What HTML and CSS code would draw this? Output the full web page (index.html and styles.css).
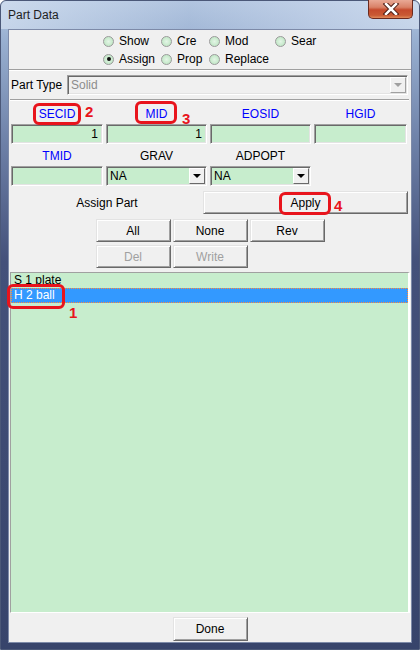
FILE: index.html
```html
<!DOCTYPE html>
<html>
<head>
    <link rel="stylesheet" href="styles.css">
</head>
<body>

<div class="window">
    <div class="titlebar">
        <span class="title">Part Data</span>
        <div class="close">
            <svg width="20" height="12" viewBox="0 0 20 12">
                <path d="M5 1 L15 11 M15 1 L5 11" stroke="#4a1a12" stroke-width="4.5" stroke-linecap="square"/>
                <path d="M5 1 L15 11 M15 1 L5 11" stroke="#ffffff" stroke-width="2.5" stroke-linecap="square"/>
            </svg>
        </div>
    </div>

    <div class="client">
        <div class="modes">
            <label class="opt"><span class="radio"></span>Show</label>
            <label class="opt"><span class="radio"></span>Cre</label>
            <label class="opt"><span class="radio"></span>Mod</label>
            <label class="opt"><span class="radio"></span>Sear</label>
            <label class="opt"><span class="radio on"></span>Assign</label>
            <label class="opt"><span class="radio"></span>Prop</label>
            <label class="opt"><span class="radio"></span>Replace</label>
        </div>
        <div class="sep"></div>

        <div class="type-row">
            <span class="type-label">Part Type</span>
            <div class="combo disabled">
                <span>Solid</span>
                <span class="drop"><span class="arrow"></span></span>
            </div>
        </div>
        <div class="sep wide"></div>

        <div class="fields">
            <span class="lbl blue">SECID</span>
            <span class="lbl blue">MID</span>
            <span class="lbl blue">EOSID</span>
            <span class="lbl blue">HGID</span>
            <div class="field">1</div>
            <div class="field">1</div>
            <div class="field"></div>
            <div class="field"></div>
        </div>

        <div class="fields second">
            <span class="lbl blue">TMID</span>
            <span class="lbl">GRAV</span>
            <span class="lbl">ADPOPT</span>
            <span></span>
            <div class="field"></div>
            <div class="combo">
                <span>NA</span>
                <span class="drop"><span class="arrow"></span></span>
            </div>
            <div class="combo">
                <span>NA</span>
                <span class="drop"><span class="arrow"></span></span>
            </div>
        </div>

        <div class="assign-row">
            <span class="assign-label">Assign Part</span>
            <button class="btn apply">Apply</button>
        </div>

        <div class="actions">
            <button class="btn">All</button>
            <button class="btn">None</button>
            <button class="btn">Rev</button>
            <button class="btn" disabled>Del</button>
            <button class="btn" disabled>Write</button>
        </div>

        <div class="list">
            <div class="item">S 1 plate</div>
            <div class="item selected">H 2 ball</div>
        </div>

        <div class="bottom">
            <button class="btn done">Done</button>
        </div>
    </div>

    <!-- annotation marks drawn over the dialog -->
    <div class="mark mark-secid"></div><span class="num num-2">2</span>
    <div class="mark mark-mid"></div><span class="num num-3">3</span>
    <div class="mark mark-apply"></div><span class="num num-4">4</span>
    <div class="mark mark-ball"></div><span class="num num-1">1</span>
</div>

</body>
</html>
```

FILE: styles.css
```css
body {
    margin: 0;
    font-family: "Liberation Sans", Arial, sans-serif;
    font-size: 12px;
    color: #000;
}

.window {
    position: relative;
    width: 420px;
    height: 650px;
    box-sizing: border-box;
    display: flex;
    flex-direction: column;
    background: linear-gradient(to bottom, #b4c7e1 0, #98afd0 40px, #6e81a8 140px, #44517a 260px, #37446b 100%);
    border-radius: 6px 6px 0 0;
    border: 1px solid #4b5878;
}

.titlebar {
    height: 28px;
    position: relative;
    background: linear-gradient(to right, rgba(214,226,242,0.7) 0, rgba(170,190,220,0.3) 45%, rgba(200,214,236,0.6) 75%, rgba(214,226,242,0.7) 100%);
    border-radius: 6px 6px 0 0;
}

.title {
    position: absolute;
    left: 7px;
    top: 7px;
    font-size: 12px;
    color: #1e1e1e;
}

.close {
    position: absolute;
    right: 6px;
    top: -1px;
    width: 45px;
    height: 19px;
    box-sizing: border-box;
    border: 1px solid #6b2a1e;
    border-top: none;
    border-radius: 0 0 5px 5px;
    background: linear-gradient(to bottom, #e9a996 0, #d98268 40%, #c54a2c 55%, #c95a34 85%, #e08a5a 100%);
    display: flex;
    align-items: center;
    justify-content: center;
}

.client {
    flex: 1;
    margin: 0 7px 6px 7px;
    border: 1px solid #7d8aa8;
    background: #f0f0f0;
    display: flex;
    flex-direction: column;
}

/* mode radios */
.modes {
    display: grid;
    grid-template-columns: 58px 48px 66px auto;
    grid-auto-rows: 18px;
    margin: 2px 0 0 94px;
}

.opt {
    display: flex;
    align-items: center;
    gap: 5px;
}

.radio {
    width: 11px;
    height: 11px;
    box-sizing: border-box;
    border-radius: 50%;
    border: 1px solid #9a9a9a;
    background: radial-gradient(circle at 50% 50%, #e4f5e6 0, #c3e8c8 70%, #b4d8b8 100%);
    display: flex;
    align-items: center;
    justify-content: center;
}

.radio.on::after {
    content: "";
    width: 4px;
    height: 4px;
    border-radius: 50%;
    background: #111;
}

.sep {
    margin-top: 1px;
    height: 0;
    border-top: 1px solid #a0a0a0;
    border-bottom: 1px solid #fff;
}

.sep.wide {
    margin: 4px 2px 0 1px;
}

/* part type */
.type-row {
    display: flex;
    align-items: center;
    margin: 4px 3px 0 2px;
}

.type-label {
    width: 56px;
}

.combo {
    flex: 1;
    height: 20px;
    box-sizing: border-box;
    display: flex;
    align-items: center;
    justify-content: space-between;
    padding-left: 3px;
    background: #c7edcd;
    border: 1px solid;
    border-color: #a0a0a0 #fff #fff #a0a0a0;
    box-shadow: inset 1px 1px 0 #696969, inset -1px -1px 0 #e3e3e3;
}

.combo.disabled {
    background: #f0f0f0;
    color: #8c8c8c;
}

.drop {
    width: 16px;
    height: 16px;
    margin-right: 1px;
    box-sizing: border-box;
    background: #f0f0f0;
    border: 1px solid;
    border-color: #fff #696969 #696969 #fff;
    display: flex;
    align-items: center;
    justify-content: center;
}

.arrow {
    width: 0;
    height: 0;
    border-left: 4px solid transparent;
    border-right: 4px solid transparent;
    border-top: 4px solid #000;
}

.disabled .drop {
    border-color: #fff #a0a0a0 #a0a0a0 #fff;
}

.disabled .arrow {
    border-top-color: #a0a0a0;
}

/* id fields */
.fields {
    display: grid;
    grid-template-columns: 92px 101px 101px 93px;
    grid-template-rows: 14px 20px;
    column-gap: 3px;
    row-gap: 3px;
    margin: 6px 4px 0 2px;
}

.fields.second {
    margin-top: 5px;
}

.lbl {
    text-align: center;
    line-height: 14px;
}

.lbl.blue {
    color: #0000ff;
}

.field {
    box-sizing: border-box;
    background: #c7edcd;
    text-align: right;
    padding-right: 4px;
    line-height: 18px;
    border: 1px solid;
    border-color: #a0a0a0 #fff #fff #a0a0a0;
    box-shadow: inset 1px 1px 0 #696969, inset -1px -1px 0 #e3e3e3;
}

/* assign row */
.assign-row {
    display: flex;
    align-items: center;
    margin: 5px 2px 0 2px;
}

.assign-label {
    width: 192px;
    text-align: center;
}

.btn {
    font-family: "Liberation Sans", Arial, sans-serif;
    font-size: 12px;
    color: #000;
    height: 23px;
    padding: 0;
    box-sizing: border-box;
    background: #f0f0f0;
    border: 1px solid;
    border-color: #e3e3e3 #696969 #696969 #e3e3e3;
    box-shadow: inset 1px 1px 0 #fff, inset -1px -1px 0 #a0a0a0;
}

.btn:disabled {
    color: #a0a0a0;
}

.apply {
    width: 205px;
}

.actions {
    display: grid;
    grid-template-columns: 75px 75px 75px;
    column-gap: 2px;
    row-gap: 3px;
    justify-content: center;
    margin-top: 5px;
}

/* part list */
.list {
    flex: 1;
    margin: 4px 1px 0 1px;
    background: #c7edcd;
    border: 1px solid;
    border-color: #a0a0a0 #fff #fff #a0a0a0;
    border-right-width: 2px;
}

.item {
    height: 15px;
    line-height: 15px;
    padding-left: 3px;
    box-sizing: border-box;
}

.item.selected {
    background: #3399ff;
    color: #fff;
    border: 1px dotted #ff8a3c;
    line-height: 13px;
    padding-left: 2px;
}

.bottom {
    display: flex;
    justify-content: center;
    margin: 4px 0 1px 0;
}

.done {
    width: 75px;
    height: 24px;
}

/* red annotation marks */
.mark {
    position: absolute;
    box-sizing: border-box;
    border: 3px solid #e8141c;
    border-radius: 6px;
}

.mark-secid { left: 32px; top: 102px; width: 48px; height: 22px; }
.mark-mid   { left: 134px; top: 100px; width: 42px; height: 23px; }
.mark-apply { left: 278px; top: 191px; width: 52px; height: 23px; }
.mark-ball  { left: 6px; top: 283px; width: 58px; height: 25px; }

.num {
    position: absolute;
    color: #e8141c;
    font-weight: bold;
    font-size: 15px;
    line-height: 15px;
}

.num-2 { left: 84px; top: 103px; }
.num-3 { left: 181px; top: 110px; }
.num-4 { left: 333px; top: 197px; }
.num-1 { left: 68px; top: 304px; }
```
